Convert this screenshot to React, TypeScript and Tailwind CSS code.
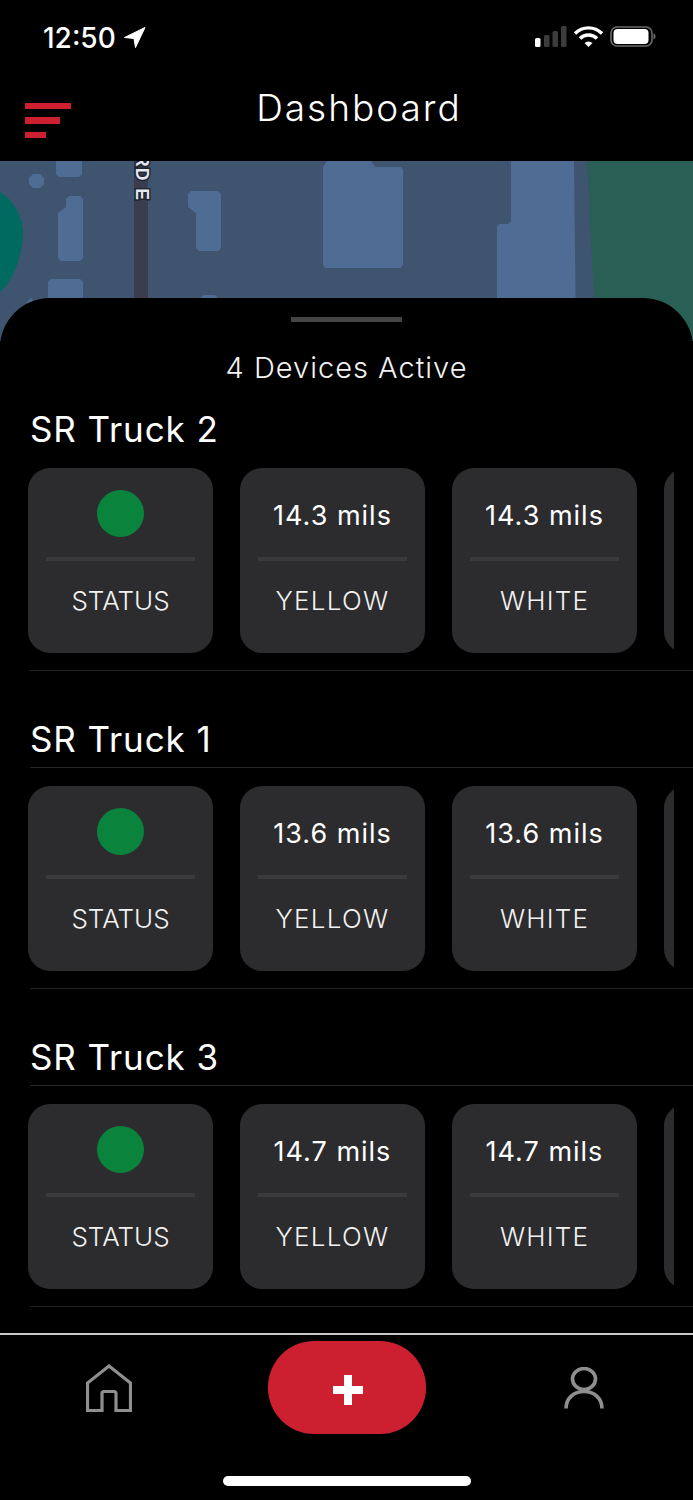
const trucks = [
  { name: 'SR Truck 2', mils: '14.3 mils', titleLine: false },
  { name: 'SR Truck 1', mils: '13.6 mils', titleLine: true },
  { name: 'SR Truck 3', mils: '14.7 mils', titleLine: true },
];

function StatusIcons() {
  return (
    <div className="flex items-center">
      <svg width="122" height="24" viewBox="0 0 122 24" fill="none">
        <rect x="0" y="12" width="5.5" height="9" rx="1.5" fill="#fff" />
        <rect x="9" y="9" width="5.5" height="12" rx="1.5" fill="#3c3c3c" />
        <rect x="17.5" y="5" width="5.5" height="16" rx="1.5" fill="#3c3c3c" />
        <rect x="26" y="0" width="5.5" height="21" rx="1.5" fill="#3c3c3c" />
        <path d="M40 7.5a19 19 0 0 1 27 0" stroke="#fff" strokeWidth="3.4" />
        <path d="M45 12.5a12 12 0 0 1 17 0" stroke="#fff" strokeWidth="3.4" />
        <path d="M49.5 17a6 6 0 0 1 8 0l-4 4z" fill="#fff" />
        <rect x="76" y="1" width="41" height="19" rx="6" stroke="#6a6a6a" strokeWidth="1.6" />
        <rect x="78.5" y="3" width="35" height="15" rx="4" fill="#fff" />
        <path d="M118.5 7.5c1.6.4 2 1.6 2 3s-.4 2.6-2 3z" fill="#6a6a6a" />
      </svg>
    </div>
  );
}

function MapBackground() {
  return (
    <svg width="693" height="180" viewBox="0 0 693 180" className="block">
      <rect width="693" height="180" fill="#3f556f" />
      <path d="M587 0H693V180H596Z" fill="#2a5f56" />
      <path d="M0 31C12 38 23 55 23 72C23 95 12 122 0 131Z" fill="#006a60" />
      <path d="M323 6l4-6h44l4 6h26l2 3v95l-3 3h-75l-2-3z" fill="#4f6d94" />
      <path d="M511 0H574L576 180H497V66l2-3h9l3-3Z" fill="#4f6d94" />
      <path d="M56 0H82V13l-3 3H59l-3-3Z" fill="#4f6d94" />
      <path d="M33 13h7l4 4v6l-4 4h-7l-4-4v-6Z" fill="#4f6d94" />
      <path d="M69 35h11l3 3v59l-3 3H61l-3-3V52l8-6V38Z" fill="#4f6d94" />
      <path d="M191 30h27l3 3v54l-3 3h-19l-3-3V52l-8-6V33Z" fill="#4f6d94" />
      <path d="M51 118h29l3 3v59H48v-59Z" fill="#4f6d94" />
      <path d="M204 134h11l3 3v43h-18v-43Z" fill="#4f6d94" />
      <path d="M27 141l4-4 4 4v39h-8Z" fill="#4f6d94" />
      <rect x="134" y="0" width="14" height="180" fill="#3a3d4d" />
      <text
        x="0"
        y="0"
        transform="translate(136 -7) rotate(90)"
        fill="#e4e8f2"
        stroke="#1f2430"
        strokeWidth="3"
        paintOrder="stroke"
        fontSize="17.5"
        fontWeight="700"
        fontFamily="'Liberation Sans', sans-serif"
        letterSpacing="1"
        wordSpacing="1"
      >
        RD E
      </text>
    </svg>
  );
}

function StatCard({ label, value, labelClass }: { label: string; value?: string; labelClass?: string }) {
  return (
    <div className="flex h-[185px] w-[185px] shrink-0 flex-col rounded-[22px] bg-[#2c2c2e] px-[18px]">
      <div className="flex h-[89px] items-center justify-center pt-[2px] text-[27px] leading-none tracking-[1px] text-white">
        {value !== undefined ? (
          <span className="mt-[4px]">{value}</span>
        ) : (
          <span className="block h-[47px] w-[47px] rounded-full bg-[#0a833d]" />
        )}
      </div>
      <div className="h-[4px] bg-[#3a3a3c]" />
      <div className={`flex h-[80px] items-center justify-center text-[26px] font-light leading-none text-[#f2f2f2] ${labelClass ?? ''}`}>
        {label}
      </div>
    </div>
  );
}

function TruckSection({ name, mils, titleLine }: { name: string; mils: string; titleLine: boolean }) {
  return (
    <section>
      <h2 className="ml-[30px] h-[44px] text-[35px] font-normal leading-[44px] tracking-[0.9px] text-white">{name}</h2>
      {titleLine ? <div className="ml-[30px] mb-[18px] mt-[6px] h-px bg-[#26262c]" /> : <div className="h-[17px]" />}
      <div className="ml-[28px] flex w-[646px] gap-[27px] overflow-hidden">
        <StatCard label="STATUS" />
        <StatCard label="YELLOW" value={mils} labelClass="tracking-[1.3px]" />
        <StatCard label="WHITE" value={mils} labelClass="tracking-[1.2px]" />
        <StatCard label="" value="" />
      </div>
      <div className="ml-[30px] mb-[46px] mt-[17px] h-px bg-[#222224]" />
    </section>
  );
}

export default function App() {
  return (
    <div className="flex h-[1500px] w-[693px] flex-col overflow-hidden bg-black font-['Inter',sans-serif] text-white">
      {/* Status bar */}
      <div className="flex h-[75px] items-center justify-between pl-[43px] pr-[36px]">
        <div className="flex items-center gap-[8px]">
          <span className="text-[28px] font-medium leading-none">12:50</span>
          <svg width="22" height="21" viewBox="0 0 22 21">
            <path d="M21 0.5 0.5 10.5 10 11.5 11.5 20.5Z" fill="#fff" stroke="#fff" strokeLinejoin="round" />
          </svg>
        </div>
        <StatusIcons />
      </div>

      {/* Header */}
      <div className="relative flex h-[86px] items-center justify-center pb-[22px]">
        <div className="absolute left-[25px] top-[28px] flex flex-col gap-[8px]">
          <div className="h-[6px] w-[46px] bg-[#cc2031]" />
          <div className="h-[7px] w-[35px] bg-[#cc2031]" />
          <div className="h-[6px] w-[21px] bg-[#cc2031]" />
        </div>
        <h1 className="ml-[25px] text-[37px] font-light leading-none tracking-[2px]">Dashboard</h1>
      </div>

      <MapBackground />

      {/* Bottom sheet */}
      <div className="-mt-[43px] min-h-0 flex-1 overflow-hidden rounded-t-[50px] bg-black">
        <div className="mx-auto mt-[19px] h-[5px] w-[111px] bg-[#454545]" />
        <p className="mt-[28px] h-[36px] text-center text-[29px] font-light leading-[36px] tracking-[1px] text-[#f2f2f2]">4 Devices Active</p>
        <div className="mt-[21px]">
          {trucks.map((truck) => (
            <TruckSection key={truck.name} {...truck} />
          ))}
        </div>
      </div>

      {/* Bottom nav */}
      <nav className="relative h-[167px] shrink-0 border-t-2 border-[#c9c9c9] bg-black">
        <div className="flex items-start pl-[86px] pt-[6px]">
          <svg width="46" height="48" viewBox="0 0 46 48" fill="none" stroke="#8f8f8f" strokeWidth="3.2" className="mt-[23px]">
            <path d="M1.5 46.5V19L23 2l21.5 17v27.5H30V29.5q0-2-2-2H18q-2 0-2 2v17Z" />
          </svg>
          <button className="ml-[136px] flex h-[93px] w-[158px] items-center justify-center rounded-[46px] bg-[#cc2031]">
            <svg width="30" height="30" viewBox="0 0 30 30" className="ml-[2px] mt-[5px]">
              <path d="M11 0h8v11h11v8H19v11h-8V19H0v-8h11Z" fill="#fff" />
            </svg>
          </button>
          <svg width="40" height="42" viewBox="0 0 40 42" fill="none" stroke="#8f8f8f" strokeWidth="3.6" className="ml-[138px] mt-[26px]">
            <ellipse cx="20" cy="12" rx="11.5" ry="10.5" />
            <path d="M2 41.5C2 31 10 24.5 20 24.5S38 31 38 41.5" />
          </svg>
        </div>
        <div className="absolute left-[223px] top-[141px] h-[10px] w-[248px] rounded-full bg-white" />
      </nav>
    </div>
  );
}
